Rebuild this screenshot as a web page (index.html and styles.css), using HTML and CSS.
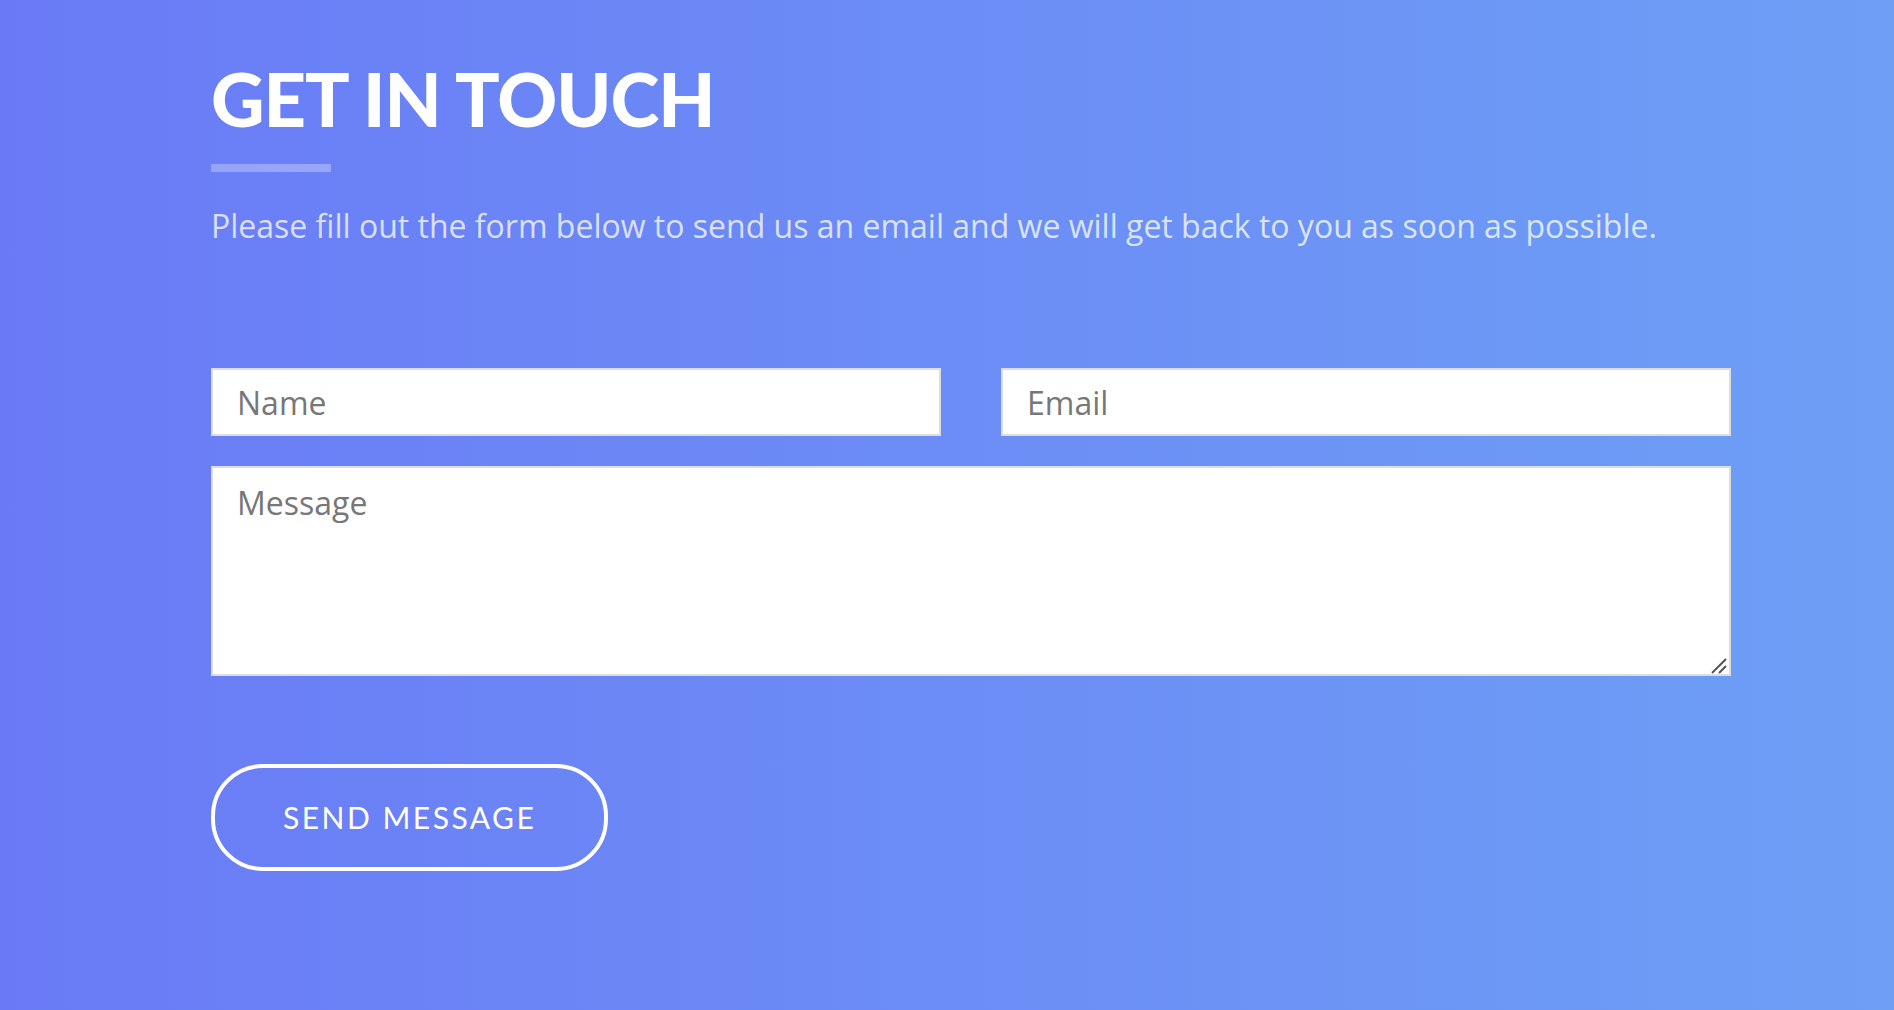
FILE: index.html
```html
<!DOCTYPE html>
<html lang="en">
<head>
<meta charset="utf-8">
<title>Get in touch</title>
<link rel="stylesheet" href="styles.css">
</head>
<body>
<section class="contact">
  <div class="container">
    <div class="section-title">
      <h2>Get In Touch</h2>
      <p>Please fill out the form below to send us an email and we will get back to you as soon as possible.</p>
    </div>
    <form class="form" name="sentMessage">
      <div class="row">
        <div class="form-group"><input type="text" class="form-control" placeholder="Name"></div>
        <div class="form-group"><input type="email" class="form-control" placeholder="Email"></div>
      </div>
      <div class="form-group textarea-wrap">
        <textarea class="form-control textarea" rows="4" placeholder="Message"></textarea>
        <svg class="grip" width="16" height="16" viewBox="0 0 16 16" aria-hidden="true">
          <path d="M1 15 L15 1 M8 15 L15 8" stroke="#555" stroke-width="2" fill="none"/>
        </svg>
      </div>
      <button type="submit" class="btn-custom">Send Message</button>
    </form>
  </div>
</section>
</body>
</html>
```
FILE: styles.css
```css
html, body {
  margin: 0;
  padding: 0;
  height: 100%;
}
body {
  font-family: "Open Sans", sans-serif;
}
.contact {
  min-height: 1010px;
  box-sizing: border-box;
  background: linear-gradient(to right, #6a7af6 0%, #6d9ff5 100%);
}
.container {
  width: 1520px;
  padding: 59px 0 0 211px;
}
.section-title h2 {
  position: relative;
  margin: 0 0 30px;
  padding-bottom: 34px;
  font-family: "Lato", sans-serif;
  font-weight: 900;
  font-size: 74px;
  line-height: 79px;
  text-transform: uppercase;
  letter-spacing: -1px;
  color: #fff;
}
.section-title h2::after {
  content: "";
  position: absolute;
  left: 0;
  bottom: 0;
  width: 120px;
  height: 8px;
  background: rgba(255, 255, 255, 0.3);
}
.section-title p {
  margin: 0;
  font-size: 32px;
  line-height: 48px;
  color: rgba(255, 255, 255, 0.75);
}
.form {
  padding-top: 118px;
}
.row {
  display: grid;
  grid-template-columns: 1fr 1fr;
  column-gap: 60px;
}
.form-group {
  margin-bottom: 30px;
}
.textarea-wrap {
  position: relative;
}
.grip {
  position: absolute;
  right: 4px;
  bottom: 2px;
  pointer-events: none;
}
.form-control {
  display: block;
  width: 100%;
  box-sizing: border-box;
  height: 68px;
  margin: 0;
  padding: 12px 24px;
  font-family: "Open Sans", sans-serif;
  font-size: 32px;
  line-height: 1.42857;
  color: #444;
  background: #fff;
  border: 2px solid #ddd;
  border-radius: 0;
  outline: none;
}
.form-control::placeholder {
  color: #777;
}
.textarea {
  height: 210px;
  resize: none;
}
.btn-custom {
  margin: 58px 0 0;
  padding: 28px 68px;
  font-family: "Lato", sans-serif;
  font-weight: 400;
  font-size: 30px;
  line-height: 43px;
  letter-spacing: 2.5px;
  text-transform: uppercase;
  color: #fff;
  background: transparent;
  border: 4px solid #fff;
  border-radius: 52px;
  cursor: pointer;
}
```
